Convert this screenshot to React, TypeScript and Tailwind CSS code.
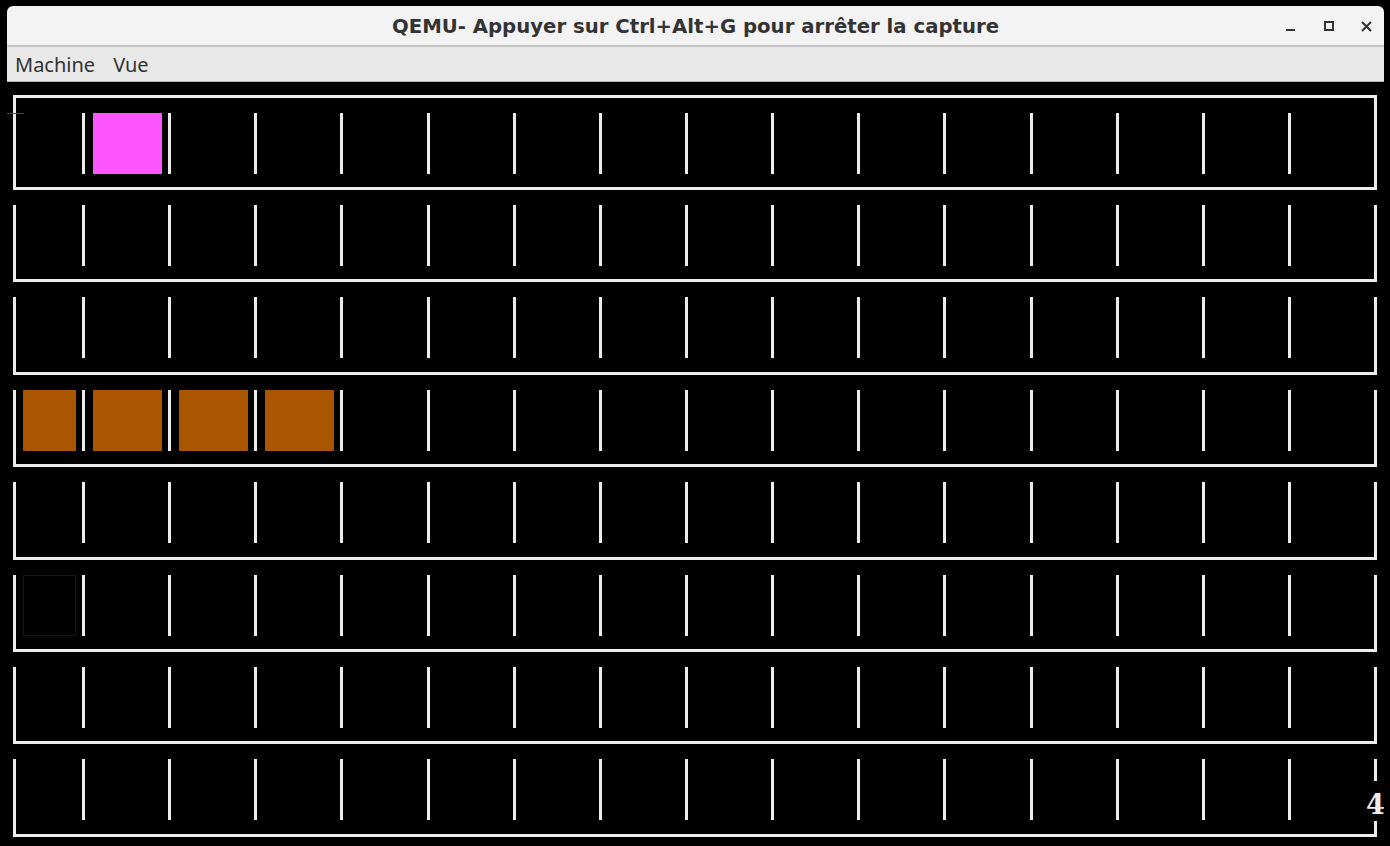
const ROW_COUNT = 8;
const COL_COUNT = 16;

type Fill = "pink" | "brown" | "ghost";

// which text-mode cells hold a block
const FILLS: Record<string, Fill> = {
  "0-1": "pink",
  "3-0": "brown",
  "3-1": "brown",
  "3-2": "brown",
  "3-3": "brown",
  "5-0": "ghost",
};

const LINE = "bg-[#ececec]";

function Block({ fill }: { fill?: Fill }) {
  if (fill === "pink") return <div className="h-full w-full bg-[#ff55ff]" />;
  if (fill === "brown") return <div className="h-full w-full bg-[#aa5500]" />;
  if (fill === "ghost") return <div className="h-full w-full border border-[#2a0a2a]" />;
  return null;
}

function CellRow({ row }: { row: number }) {
  const cells = Array.from({ length: COL_COUNT }, (_, col) => col);
  return (
    <div className="flex h-[61px]">
      {cells.map((col) => (
        <div key={col} className={col === 0 ? "flex h-full w-[66px]" : "flex h-full flex-1"}>
          {col > 0 && <div className={`h-full w-[3px] ${LINE}`} />}
          <div className={col === 0 ? "h-full flex-1 pl-[7px] pr-[6px]" : "h-full flex-1 pl-[8px] pr-[6px]"}>
            <Block fill={FILLS[`${row}-${col}`]} />
          </div>
        </div>
      ))}
    </div>
  );
}

function TitleBar() {
  return (
    <div className="relative flex h-[41px] items-center justify-center rounded-t-[6px] border-b-2 border-[#c4c4c4] bg-[#f3f3f3] pt-[3px]">
      <span className="font-['DejaVu_Sans',sans-serif] text-[19.7px] font-bold text-[#333]">
        QEMU- Appuyer sur Ctrl+Alt+G pour arrêter la capture
      </span>
      <div className="absolute right-[12px] top-[15px] flex items-center gap-[26px] text-[#333]">
        <svg width="11" height="11" viewBox="0 0 11 11" className="-translate-x-[2px]">
          <path d="M1 9h9" stroke="currentColor" strokeWidth="2" />
        </svg>
        <svg width="11" height="11" viewBox="0 0 11 11">
          <rect x="1" y="1" width="8" height="8" fill="none" stroke="currentColor" strokeWidth="2" />
        </svg>
        <svg width="11" height="11" viewBox="0 0 11 11">
          <path d="M1 1l9 9M10 1l-9 9" stroke="currentColor" strokeWidth="2" />
        </svg>
      </div>
    </div>
  );
}

function MenuBar() {
  return (
    <div className="flex h-[35px] items-center gap-[18px] border-b border-[#b4b4b4] bg-[#e8e8e8] pl-[8px] pt-[2px] font-['Noto_Sans',sans-serif] text-[20px] text-[#333]">
      <span>Machine</span>
      <span>Vue</span>
    </div>
  );
}

export default function App() {
  const rows = Array.from({ length: ROW_COUNT - 1 }, (_, i) => i + 1);

  return (
    <div className="h-[846px] w-[1390px] overflow-hidden bg-black pl-[7px] pt-[6px]">
      <div className="flex w-[1377px] flex-col">
        <TitleBar />
        <MenuBar />

        <div className="relative h-[800px] bg-black pl-[6px] pr-[7px] pt-[13px]">
          {/* stray cursor mark */}
          <div className="absolute left-0 top-[31px] h-px w-[17px] bg-[#4a4a4a]" />

          <div className="flex flex-col">
            <div className="h-[95px] border-[3px] border-[#ececec] pt-[15px]">
              <CellRow row={0} />
            </div>
            {rows.map((row) => (
              <div key={row} className="flex h-[92.4px] flex-col pt-[15px]">
                <div className="flex-1 border-x-[3px] border-b-[3px] border-[#ececec]">
                  <CellRow row={row} />
                </div>
              </div>
            ))}
          </div>

          {/* text-mode counter drawn over the right edge */}
          <div className="absolute left-[1359px] top-[699px] flex h-[40px] w-[19px] items-center justify-center bg-black pt-[7px] font-['DejaVu_Serif',serif] text-[27px] font-bold leading-none text-[#ececec]">
            4
          </div>
        </div>
      </div>
    </div>
  );
}
